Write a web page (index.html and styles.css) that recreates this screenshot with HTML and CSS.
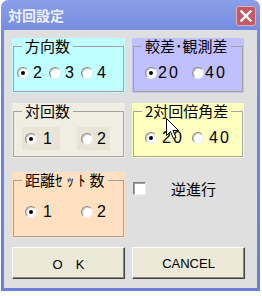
FILE: index.html
```html
<!DOCTYPE html>
<html lang="ja">
<head>
<meta charset="utf-8">
<link rel="stylesheet" href="styles.css">
</head>
<body>
<div class="window">
  <div class="titlebar">
    <span class="title">対回設定</span>
    <span class="close"><svg width="12" height="12" viewBox="0 0 12 12"><path d="M1.5 1.5L10.5 10.5M10.5 1.5L1.5 10.5" stroke="#fff" stroke-width="2.4" stroke-linecap="square"/></svg></span>
  </div>
  <div class="client">
    <div class="grid">
      <div class="group cyan">
        <fieldset>
          <legend>方向数</legend>
          <div class="opts g1">
            <span class="opt"><span class="radio on"></span><span class="lab">2</span></span>
            <span class="opt"><span class="radio"></span><span class="lab">3</span></span>
            <span class="opt"><span class="radio"></span><span class="lab">4</span></span>
          </div>
        </fieldset>
      </div>
      <div class="group lav">
        <fieldset>
          <legend>較差･観測差</legend>
          <div class="opts g2">
            <span class="opt"><span class="radio on"></span><span class="lab wide">20</span></span>
            <span class="opt"><span class="radio"></span><span class="lab wide">40</span></span>
          </div>
        </fieldset>
      </div>
      <div class="group beige row2">
        <fieldset>
          <legend>対回数</legend>
          <div class="opts g3">
            <span class="blk b1"><span class="radio on"></span><span class="lab">1</span></span>
            <span class="blk b2"><span class="radio"></span><span class="lab">2</span></span>
          </div>
        </fieldset>
      </div>
      <div class="group yel row2">
        <fieldset>
          <legend>2対回倍角差</legend>
          <div class="opts g4">
            <span class="opt"><span class="radio on"></span><span class="lab wide">20</span></span>
            <span class="opt"><span class="radio"></span><span class="lab wide">40</span></span>
          </div>
        </fieldset>
      </div>
      <div class="group peach row3">
        <fieldset>
          <legend>距離<span class="kana">ｾｯﾄ</span>数</legend>
          <div class="opts g5">
            <span class="blk b1 plain"><span class="radio on"></span><span class="lab">1</span></span>
            <span class="blk b2 plain"><span class="radio"></span><span class="lab">2</span></span>
          </div>
        </fieldset>
      </div>
      <div class="check row3">
        <span class="box"></span><span class="checklab">逆進行</span>
      </div>
      <button class="btn">O　K</button>
      <button class="btn">CANCEL</button>
    </div>
  </div>
  <svg class="cursor" width="13" height="22" viewBox="0 0 13 22"><path d="M0.5 0.5V17.5L4.5 13.5L7.5 20.5L10 19.5L7 12.5H12.5Z" fill="#fff" stroke="#000" stroke-width="1"/></svg>
</div>
</body>
</html>
```

FILE: styles.css
```css
* { box-sizing: border-box; }
html, body { margin: 0; padding: 0; background: #fff; }
body {
  width: 262px;
  height: 296px;
  overflow: hidden;
  font-family: "Liberation Sans", "Noto Sans CJK JP", sans-serif;
}
.window {
  position: relative;
  width: 259px;
  margin-left: 1px;
  padding: 0 3px 3px;
  border-radius: 7px 7px 0 0;
  background: linear-gradient(#8a9ee8, #7088dc 40px, #6a80d8);
}
.titlebar {
  height: 30px;
  display: flex;
  align-items: center;
  justify-content: space-between;
  padding-left: 4px;
}
.title {
  color: #eef0ff;
  font-family: "Noto Sans CJK JP", sans-serif;
  font-weight: bold;
  font-size: 14px;
  line-height: 16px;
}
.close {
  width: 20px;
  height: 20px;
  margin-right: 1px;
  margin-top: 2px;
  border: 1px solid #e6aab2;
  border-radius: 3px;
  background: #c25a68;
  display: flex;
  align-items: center;
  justify-content: center;
}
.client {
  height: 258px;
  background: #dfdfdf;
  padding: 8px 0 0 8px;
}
.grid {
  display: grid;
  grid-template-columns: 113px 113px;
  align-items: start;
  column-gap: 7px;
}
.group { padding: 0 1px 1px; height: 55px; }
.group.lav, .group.yel { width: 112px; }
.cyan { background: #c0ffff; }
.lav { background: #c0c0ff; }
.beige { background: #f0eee3; }
.yel { background: #ffffc0; }
.peach { background: #ffe0c0; }
.row2 { margin-top: 10px; }
.row3 { margin-top: 14px; }
.group.row3 { height: 66px; }
fieldset {
  margin: 0;
  padding: 0;
  height: 100%;
  border: 1px solid #a3a3a0;
  min-width: 0;
}
legend {
  margin-left: 8px;
  padding: 0 3px;
  font-family: "Noto Sans CJK JP", sans-serif;
  font-size: 15px;
  line-height: 16px;
  color: #000;
}
.kana { letter-spacing: 4px; }
.opts {
  display: flex;
  align-items: center;
  height: 20px;
  margin-top: 9px;
  font-size: 16px;
  color: #000;
}
.opt { display: flex; align-items: center; }
.g1 { padding-left: 3px; }
.g1 .opt { width: 32px; gap: 4px; }
.g2 { padding-left: 11px; }
.g2 .opt { width: 47px; gap: 1px; }
.g4 { padding-left: 11px; }
.g4 .opt { width: 47px; gap: 5px; }
.lab { line-height: 16px; }
.lab.wide { letter-spacing: 2px; }
.g3 { height: 23px; margin-top: 8px; padding-left: 8px; }
.g5 { height: 20px; margin-top: 14px; padding-left: 8px; }
.blk {
  display: flex;
  align-items: center;
  height: 100%;
  background: #e8e5d7;
}
.blk.plain { background: transparent; }
.b1 { width: 38px; padding-left: 3px; gap: 6px; }
.b2 { width: 33px; margin-left: 17px; padding-left: 4px; gap: 4px; }
.radio {
  position: relative;
  flex: none;
  width: 12px;
  height: 12px;
  border-radius: 50%;
  background: #fff;
  border: 1px solid;
  border-color: #8a8a8a #eeeeee #eeeeee #8a8a8a;
  box-shadow: inset 1px 1px 0 #d0d0d0;
}
.radio.on::after {
  content: "";
  position: absolute;
  left: 3px;
  top: 3px;
  width: 4px;
  height: 4px;
  border-radius: 50%;
  background: #000;
}
.check {
  display: flex;
  align-items: flex-start;
  padding-top: 10px;
  padding-left: 1px;
}
.box {
  width: 13px;
  height: 13px;
  flex: none;
  background: #fff;
  border: 1px solid;
  border-color: #808080 #f4f2e8 #f4f2e8 #808080;
  box-shadow: inset 1px 1px 0 #a0a0a0;
}
.checklab {
  margin-left: 25px;
  margin-top: -1px;
  font-family: "Noto Sans CJK JP", sans-serif;
  font-size: 15px;
  line-height: 16px;
  color: #000;
}
.btn {
  margin: 9px 0 0;
  padding: 0;
  width: 113px;
  height: 32px;
  background: #ece9d8;
  border: 1px solid;
  border-color: #ffffff #404040 #404040 #ffffff;
  box-shadow: inset -1px -1px 0 #8c8a80;
  font-family: "Liberation Sans", "Noto Sans CJK JP", sans-serif;
  font-size: 13px;
  color: #000;
}
.cursor {
  position: absolute;
  left: 165px;
  top: 118px;
}
```
